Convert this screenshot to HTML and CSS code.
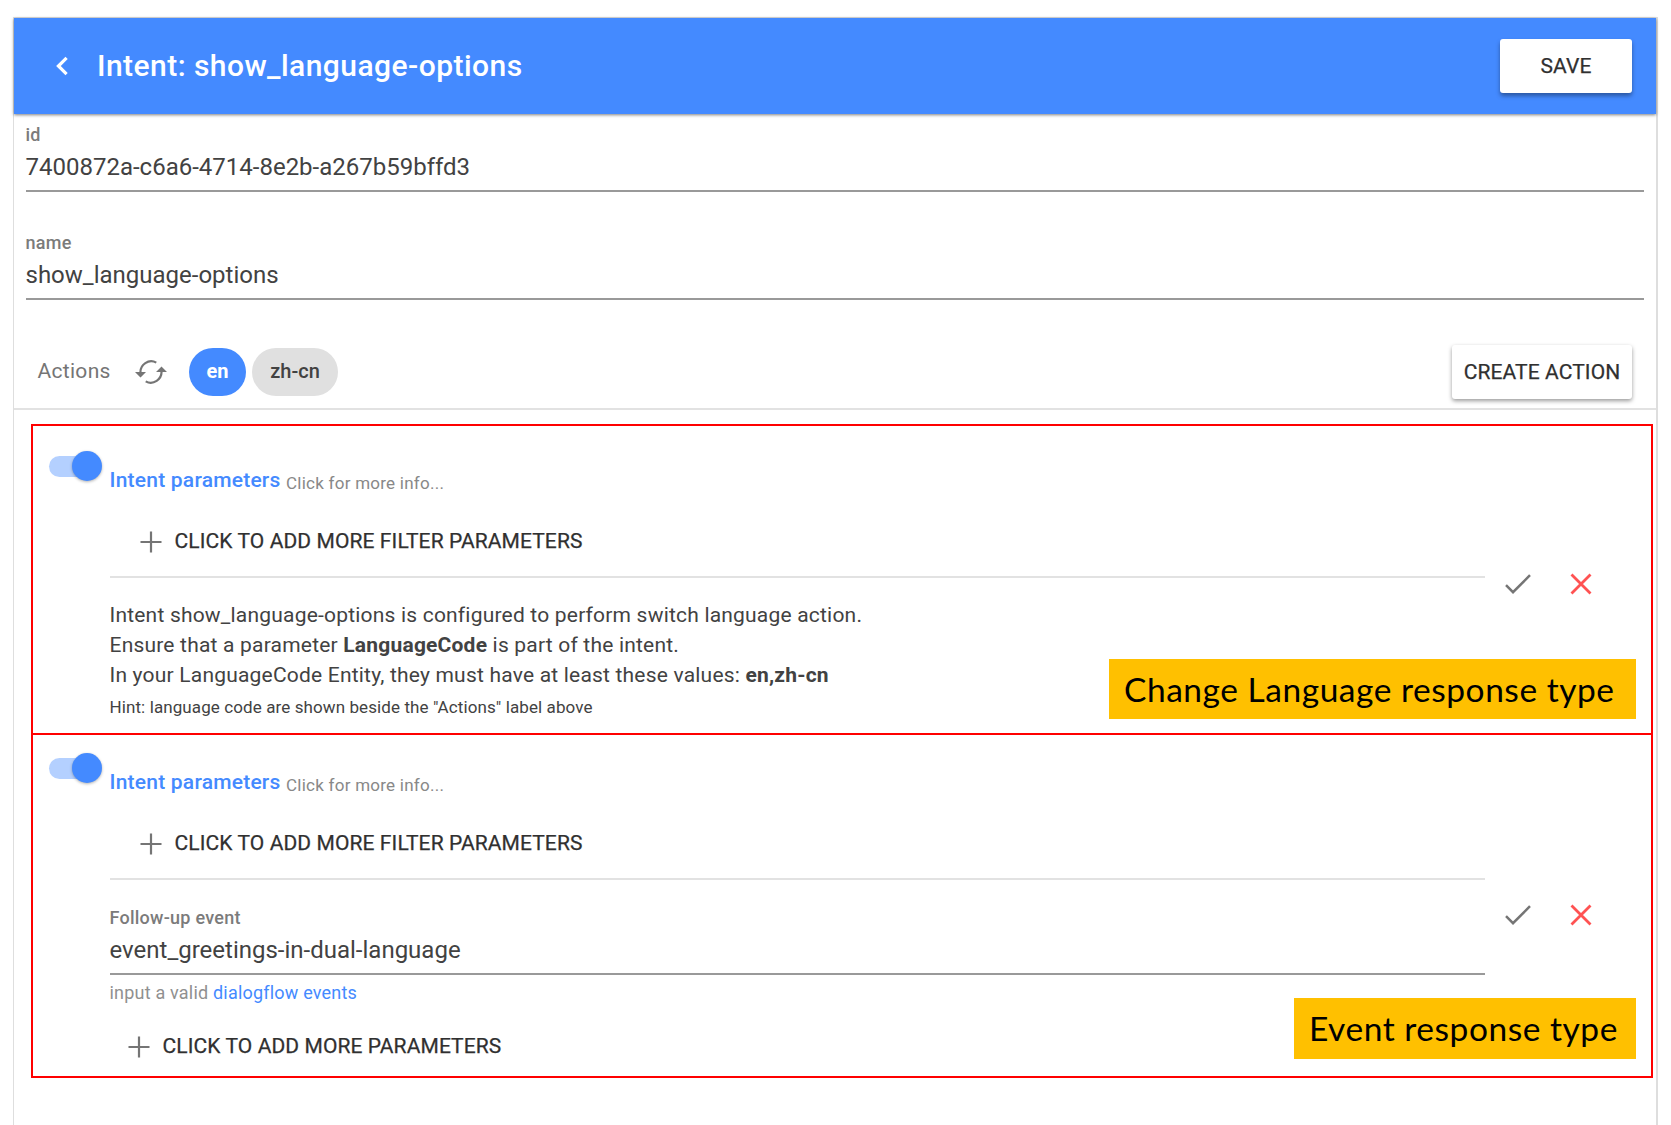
FILE: index.html
```html
<!DOCTYPE html>
<html lang="en">
<head>
<meta charset="utf-8">
<title>Intent: show_language-options</title>
<link rel="stylesheet" href="styles.css">
</head>
<body>
<svg class="defs" width="0" height="0">
  <symbol id="plus" viewBox="0 0 22 22"><path d="M11 0.5V21.5M0.5 11H21.5" fill="none" stroke="#757575" stroke-width="2.2"/></symbol>
  <symbol id="check" viewBox="0 0 26 20"><path d="M1 11.2L8 18.2L25 1.2" fill="none" stroke="#757575" stroke-width="2.5"/></symbol>
  <symbol id="cross" viewBox="0 0 22 22"><path d="M1.5 1.5L20.5 20.5M20.5 1.5L1.5 20.5" fill="none" stroke="#ff5252" stroke-width="2.8"/></symbol>
</svg>
<main class="card">
  <header class="toolbar">
    <svg class="back" width="14" height="20" viewBox="0 0 14 20"><path d="M11.6 1.8L3.4 10L11.6 18.2" fill="none" stroke="#fff" stroke-width="3.2"/></svg>
    <h1 class="title">Intent: show_language-options</h1>
    <button class="btn btn-save">SAVE</button>
  </header>
  <section class="fields">
    <div class="field">
      <label class="label">id</label>
      <div class="value value-id">7400872a-c6a6-4714-8e2b-a267b59bffd3</div>
    </div>
    <div class="field">
      <label class="label">name</label>
      <div class="value">show_language-options</div>
    </div>
  </section>
  <div class="actions">
    <span class="actions-label">Actions</span>
    <svg class="refresh" width="32" height="26" viewBox="0 0 32 26"><g fill="none" stroke="#757575" stroke-width="2.2"><path d="M5.5 14A10.8 10.8 0 0 1 21.3 3.6"/><path d="M26.5 12A10.8 10.8 0 0 1 10.7 22.4"/></g><path d="M0 13H11L5.5 18.6zM21 13H32L26.5 7.4z" fill="#757575"/></svg>
    <span class="chip chip-on">en</span>
    <span class="chip">zh-cn</span>
    <button class="btn btn-create">CREATE ACTION</button>
  </div>
  <section class="responses">
    <article class="response response-language">
      <div class="switch"><span class="thumb"></span></div>
      <div class="body">
        <p class="heading"><b class="intent">Intent parameters</b><span class="more">Click for more info...</span></p>
        <div class="add add-filter"><svg width="22" height="22"><use href="#plus"/></svg><span>CLICK TO ADD MORE FILTER PARAMETERS</span></div>
        <div class="info">
          <p>Intent show_language-options is configured to perform switch language action.</p>
          <p>Ensure that a parameter <b>LanguageCode</b> is part of the intent.</p>
          <p>In your LanguageCode Entity, they must have at least these values: <b>en,zh-cn</b></p>
          <p class="hint">Hint: language code are shown beside the "Actions" label above</p>
        </div>
      </div>
      <div class="controls"><svg width="26" height="20"><use href="#check"/></svg><svg width="22" height="22"><use href="#cross"/></svg></div>
      <div class="note"><span>Change Language response type</span></div>
    </article>
    <article class="response response-event">
      <div class="switch"><span class="thumb"></span></div>
      <div class="body">
        <p class="heading"><b class="intent">Intent parameters</b><span class="more">Click for more info...</span></p>
        <div class="add add-filter"><svg width="22" height="22"><use href="#plus"/></svg><span>CLICK TO ADD MORE FILTER PARAMETERS</span></div>
        <div class="field field-event">
          <label class="label">Follow-up event</label>
          <div class="value value-event">event_greetings-in-dual-language</div>
        </div>
        <p class="helper">input a valid <a class="link">dialogflow events</a></p>
        <div class="add"><svg width="22" height="22"><use href="#plus"/></svg><span>CLICK TO ADD MORE PARAMETERS</span></div>
      </div>
      <div class="controls"><svg width="26" height="20"><use href="#check"/></svg><svg width="22" height="22"><use href="#cross"/></svg></div>
      <div class="note note-event"><span>Event response type</span></div>
    </article>
  </section>
</main>
</body>
</html>
```
FILE: styles.css
```css
* { box-sizing: border-box; }
body {
  margin: 0;
  height: 1125px;
  overflow: hidden;
  padding: 17px 13px 0 12.5px;
  background: #fff;
  color: #424242;
  font-family: Roboto, sans-serif;
  font-size: 21px;
}
p, h1 { margin: 0; }
svg { display: block; flex: none; }
.defs { position: absolute; }
.card {
  height: 1120px;
  border: 1px solid #dedede;
  border-right-width: 2px;
}
.toolbar {
  display: flex;
  align-items: center;
  height: 96px;
  padding: 0 24px 0 41px;
  background: #448aff;
  color: #fff;
  box-shadow: 0 1px 3px rgba(0, 0, 0, .5);
}
.title {
  margin-left: 28.5px;
  font-size: 30px;
  font-weight: 500;
  letter-spacing: .45px;
  line-height: 40px;
}
.btn {
  height: 54px;
  margin-left: auto;
  padding: 0;
  border: 0;
  border-radius: 3px;
  background: #fff;
  color: #303030;
  font: 400 21px/54px Roboto, sans-serif;
  -webkit-text-stroke: .25px #303030;
  letter-spacing: .1px;
  box-shadow: 0 3px 4px rgba(0, 0, 0, .36);
}
.btn-save { width: 132px; }
.btn-create { width: 180px; box-shadow: 0 2px 4px rgba(0, 0, 0, .4); }
.fields { padding: 9px 12px 0; }
.field { border-bottom: 2px solid #999; height: 69px; }
.field + .field { margin-top: 39px; }
.label {
  display: block;
  color: #7b7b7b;
  font-size: 18px;
  font-weight: 500;
  letter-spacing: .25px;
  line-height: 24px;
}
.value {
  margin-top: 3px;
  font-size: 24px;
  line-height: 34px;
}
.actions {
  display: flex;
  align-items: center;
  height: 110px;
  padding: 35px 24px 0 24px;
  border-bottom: 2px solid #e2e2e2;
}
.actions-label { width: 97px; color: #757575; letter-spacing: .3px; line-height: 28px; transform: translateY(-1px); }
.refresh { margin-right: 22.5px; }
.chip {
  width: 86px;
  height: 48px;
  border-radius: 24px;
  background: #e0e0e0;
  font-size: 20px;
  font-weight: 500;
  line-height: 47px;
  text-align: center;
}
.chip-on { width: 57px; margin-right: 6px; background: #448aff; color: #fff; font-weight: 700; }
.responses {
  width: 1622px;
  margin: 14px 0 0 17.5px;
  border: 2px solid #f00;
}
.response {
  position: relative;
  display: grid;
  grid-template-columns: 60.5px 1375px auto;
  padding-left: 16px;
}
.response-language { height: 309px; border-bottom: 2px solid #f00; }
.response-event { height: 341px; }
.switch {
  width: 51px;
  height: 21px;
  margin-top: 30px;
  border-radius: 11px;
  background: #b4d0ff;
}
.response-event .switch { margin-top: 23px; }
.thumb {
  display: block;
  width: 30px;
  height: 30px;
  margin-left: 23px;
  border-radius: 50%;
  background: #448aff;
  box-shadow: 0 1px 3px rgba(0, 0, 0, .3);
  transform: translateY(-5px);
}
.body { padding-top: 39px; }
.response-event .body { padding-top: 32px; }
.heading { display: flex; height: 30px; line-height: 30px; }
.intent { width: 176.5px; color: #448aff; font-weight: 500; letter-spacing: .22px; }
.more { color: #888; font-size: 17px; letter-spacing: .25px; line-height: 36px; }
.add {
  display: flex;
  gap: 12.5px;
  height: 30px;
  padding-left: 18.5px;
  align-items: center;
  color: #303030;
  -webkit-text-stroke: .25px #303030;
  letter-spacing: .1px;
}
.add span { line-height: 28px; transform: translateY(-1px); }
.add-filter {
  height: 83px;
  padding: 17px 0 5px 30.5px;
  border-bottom: 2px solid #e2e2e2;
}
.info { padding-top: 22px; line-height: 30px; letter-spacing: .2px; }
.info b { font-weight: 700; }
.info .hint { margin-top: 2px; font-size: 17px; letter-spacing: .1px; }
.field-event { margin-top: 26px; }
.helper { height: 45px; color: #909090; font-size: 18px; letter-spacing: .2px; line-height: 36px; }
.link { color: #448aff; }
.response-event .add:last-child { margin-top: 12px; }
.controls {
  display: flex;
  gap: 38.5px;
  align-items: center;
  align-self: start;
  margin: 146.5px 0 0 20.5px;
}
.response-event .controls { margin-top: 169px; }
.note {
  position: absolute;
  right: 15px;
  bottom: 14px;
  width: 527px;
  height: 60px;
  padding-left: 15px;
  background: #ffc000;
  color: #000;
  font: 33.5px/60px Lato, sans-serif;
  letter-spacing: .53px;
  white-space: nowrap;
}
.note-event { width: 342px; height: 61px; bottom: 17px; }
```
